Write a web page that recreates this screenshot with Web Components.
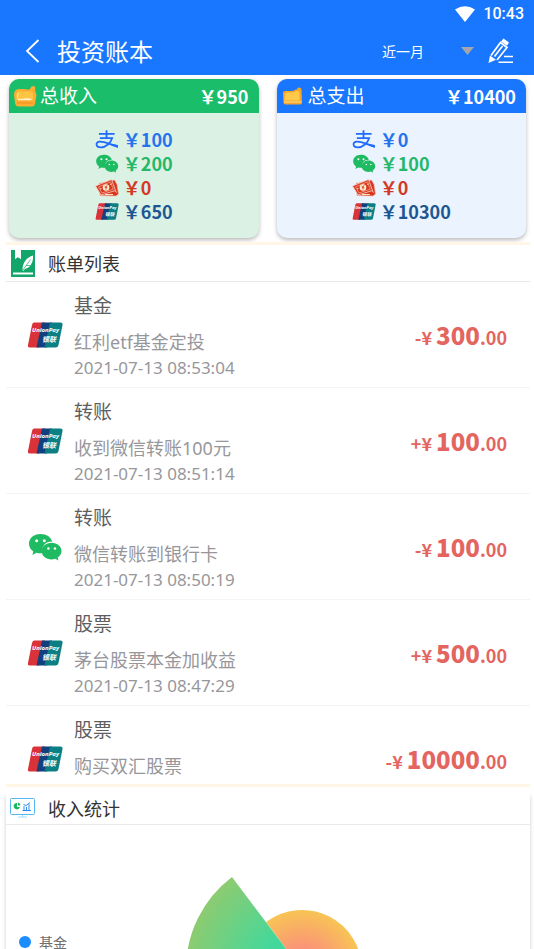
<!DOCTYPE html>
<html lang="zh-CN">
<head>
<meta charset="utf-8">
<meta name="viewport" content="width=device-width, initial-scale=1">
<title>投资账本</title>
<style>
  html, body { height: 100%; margin: 0; }
  body { background: #fff; font-family: "Noto Sans", "Noto Sans CJK SC", sans-serif; overflow: hidden; }
</style>
</head>
<body>
<ledger-page>
  <status-bar slot="top">10:43</status-bar>
  <app-bar slot="top">投资账本</app-bar>
  <summary-card slot="summary" kind="income" total="￥950" alipay="￥100" wechat="￥200" cash="￥0" union="￥650">总收入</summary-card>
  <summary-card slot="summary" kind="expense" total="￥10400" alipay="￥0" wechat="￥100" cash="￥0" union="￥10300">总支出</summary-card>
  <bill-list>
    <bill-row icon="union" sign="-" amount="300">基金<span slot="note">红利etf基金定投</span><time slot="time">2021-07-13 08:53:04</time></bill-row>
    <bill-row icon="union" sign="+" amount="100">转账<span slot="note">收到微信转账100元</span><time slot="time">2021-07-13 08:51:14</time></bill-row>
    <bill-row icon="wechat" sign="-" amount="100">转账<span slot="note">微信转账到银行卡</span><time slot="time">2021-07-13 08:50:19</time></bill-row>
    <bill-row icon="union" sign="+" amount="500">股票<span slot="note">茅台股票本金加收益</span><time slot="time">2021-07-13 08:47:29</time></bill-row>
    <bill-row icon="union" sign="-" amount="10000">股票<span slot="note">购买双汇股票</span></bill-row>
  </bill-list>
  <income-stats></income-stats>
</ledger-page>
<script>
const ICONS = {
  alipay: `<svg viewBox="0 0 24 20" fill="none" stroke="#1f6bff"><path d="M3.500 4H20M11.500 .3V8.500" stroke-width="1.900"/><path d="M4.500 8.500H17.500C16 13.500 11 18.300 5.500 18.300C0 18.300 -.5 13.200 4 12.300C9 11.500 15 15.500 23 17.500" stroke-width="1.800"/><path d="M12.500 13.500L23.500 15.800V19Z" fill="#1f6bff" stroke="none"/></svg>`,
  wechat: `<svg viewBox="0 0 34 28"><path d="M12.500 1C5.500 1 1 5.300 1 10.700c0 3.300 1.700 6 4.400 7.700L4.300 22l4.300-2.200c2 .6 4.200.6 6.300.3C12.500 13 18 8.300 24.200 8.500 23 4 18.500 1 12.500 1Z" fill="#1fbb62"/><path d="M23.600 9.700c-5.700 0-10 3.700-10 8.300s4.300 8.400 10 8.400c1.300 0 2.500-.2 3.600-.6L30.500 27.500l-.8-3c2.300-1.500 3.800-3.800 3.800-6.500 0-4.600-4.200-8.300-9.900-8.300Z" fill="#1fbb62"/><g fill="#fff"><circle cx="8.700" cy="7.800" r="1.500"/><circle cx="16.300" cy="7.800" r="1.500"/><circle cx="20.400" cy="15.500" r="1.200"/><circle cx="27" cy="15.500" r="1.200"/></g></svg>`,
  cash: `<svg viewBox="0 0 24 18"><path d="M4 5L19.500 1.500 22 6 23.500 15.500 21 17.500 5 17Z" fill="#d9361f" stroke="#f6b6a6" stroke-width=".6"/><path d="M.5 7.500L16.500 1 20.500 12 6 16.500Z" fill="#d9361f" stroke="#f8d9cf" stroke-width=".8"/><path d="M3.500 8.500L15.500 3.300 18.300 10.700 7 14.500Z" fill="none" stroke="#f8c9a8" stroke-width=".6"/><circle cx="11" cy="9" r="3.300" fill="#fff0d2"/><path d="M9.500 7.200l1.500 1.700L12 6.700M11 8.900V11.200M9.800 9.200h2.600" stroke="#d9361f" stroke-width=".8" fill="none"/><path d="M5 10.500l1.500-.6M15 6l1.500-.6M20.500 12.500l1 1.500M10 16h8" stroke="#ffe0bd"/></svg>`,
  union: `<svg viewBox="0 0 36 26"><path d="M7 .5H18L12 25.500H2.500Q.5 25.500 1 23L5 3Q5.500 .5 7 .5Z" fill="#d93238"/><path d="M15 .5H25L20 25.500H9.500Z" fill="#123f7d"/><path d="M23 .5H33.500Q36 .5 35.500 3L31.500 23Q31 25.500 28.500 25.500H17.500Z" fill="#0b7f83"/><g fill="#fff" font-family="Noto Sans, sans-serif" font-weight="700" font-style="italic"><text x="5" y="10" font-size="6">UnionPay</text><text x="15" y="20" font-size="7" font-family="Noto Sans CJK SC, sans-serif">银联</text></g></svg>`,
  income: `<svg viewBox="0 0 24 22"><path d="M1 10Q1 4 6 4H12Q15 5 17 4Q18 1 20.500 1Q23 1.500 22 5L23.500 10 22 19Q21.500 21.500 19 21.500H6Q2.500 21.500 2 18Z" fill="#faad32"/><path d="M5 6.500H18Q20 6.500 20 9V15H3.500V9Q3.500 6.500 5 6.500Z" fill="#ffc542"/><path d="M5 14.500H18.500M12 13l2 1.500 2-1.500" stroke="#fff0c7" fill="none" stroke-width="1.300"/><path d="M5.500 8Q4 10 4.500 13" stroke="#ffe69b" fill="none"/><path d="M4 18H20" stroke="#f18b21"/></svg>`,
  expense: `<svg viewBox="0 0 24 22"><path d="M2 8Q2 6 4 6H10Q13 6 14.500 4.500H16Q16 2.500 18 2.500Q20.500 2.500 20.500 5L21 17.500Q21 19.500 19 19.500H4.500Q2.500 19.500 2.500 17.500Z" fill="#f6a526"/><path d="M4 9Q4 7.500 6 7.500H11Q14 7.500 15 6H17Q18.500 6 18.500 8V15.500H3.500Z" fill="#ffc94c"/><path d="M3 17H20.500" stroke="#ffe09a" stroke-width="1.200"/></svg>`,
  book: `<svg viewBox="0 0 24 27"><path d="M0 0H4V9L7 7 10 9V0H24V27H0Z" fill="#12a66a"/><path d="M4 0V9L7 7 10 9V0Z" fill="#fff"/><path d="M2 22.500H22V24.500H2Z" fill="#fff"/><path d="M11.500 20C11.500 12 16 7.500 22 5.500C22.500 10 21 14 18.500 16.500C16.500 18.500 14 18 12.500 21Z" fill="#fff"/><path d="M12 20L19.500 9.500M15 15.500h4" stroke="#12a66a" stroke-width=".7"/></svg>`,
  board: `<svg viewBox="0 0 25 20" fill="none"><rect x=".5" y=".5" width="24" height="16" rx="1" stroke="#58b7f2"/><path d="M8 19H17M12.500 17V19" stroke="#a5d9f8"/><path d="M7 5A3.200 3.200 0 1 0 10 9H7Z" fill="#19b85d"/><path d="M8 4.500A3.200 3.200 0 0 1 10.500 7.500H8Z" fill="#19b85d"/><path d="M12.500 12.500H21M14 12V8M16.500 12V9M19 12V6M13.500 6.500L16 7.500L20 4.500" stroke="#2e8df0"/></svg>`
};

function define(name, template) {
  customElements.define(name, class extends HTMLElement {
    constructor() {
      super();
      this.attachShadow({ mode: 'open' }).innerHTML =
        typeof template === 'function' ? template(this) : template;
    }
  });
}

define('ui-icon', el => `<style>
  :host { display: block; flex: none; }
  svg { display: block; width: 100%; height: 100%; }
</style>${ICONS[el.getAttribute('name')]}`);

define('ledger-page', `<style>
  :host { display: flex; flex-direction: column; height: 100vh; overflow: hidden; }
  .cards { display: grid; grid-template-columns: 1fr 1fr; gap: 18px; padding: 4px 8px 4px 9px; }
</style>
<header><slot name="top"></slot></header>
<section class="cards"><slot name="summary"></slot></section>
<slot></slot>`);

define('status-bar', `<style>
  :host { display: flex; height: 28px; align-items: center; justify-content: flex-end; gap: 8px; padding-right: 10px;
    background: #1976ff; color: #fff; font: 500 16px/28px Roboto, sans-serif; }
  svg { width: 20px; height: 16px; }
</style>
<svg viewBox="0 0 20 16"><path d="M0 3.500Q10 -3 20 3.500L10 16Z" fill="#fff"/></svg>
<slot></slot>`);

define('app-bar', `<style>
  :host { display: flex; height: 45px; align-items: center; background: #1976ff; color: #fff; padding: 0 18px 2px 20px; }
  button { border: 0; background: none; padding: 0; color: inherit; display: block; }
  svg { display: block; }
  .back { padding: 0 12px 0 5px; }
  h1 { flex: 1; margin: 0; padding-left: 5px; font: 400 24px/44px "Noto Sans CJK SC", sans-serif; }
  .pick { display: flex; align-items: center; position: relative; margin-right: 12px; }
  select { appearance: none; border: 0; background: none; color: inherit; width: 92px; padding: 0;
    font: 400 14px/24px "Noto Sans CJK SC", sans-serif; }
  .pick svg { position: absolute; right: 0; pointer-events: none; }
  option { color: #333; }
</style>
<button class="back" aria-label="返回"><svg width="15" height="26" viewBox="0 0 15 26"><path d="M13.500 2L2 13L13.500 24" fill="none" stroke="#fff" stroke-width="1.800"/></svg></button>
<h1><slot></slot></h1>
<div class="pick"><select aria-label="时间范围"><option>近一月</option></select>
<svg width="13" height="8" viewBox="0 0 13 8"><path d="M0 0H13L6.500 8Z" fill="#a5a5ae"/></svg></div>
<button aria-label="编辑"><svg width="30" height="26" viewBox="0 0 30 26"><g fill="none" stroke="#fff" stroke-width="1.700"><path d="M5 17.500L14.500 4.500L21 9.500L11 22"/><path d="M8.500 18.500L16.500 8"/></g><path d="M15 3.500L17.500 .5L23 4.500L21 7.800Z" fill="#fff"/><path d="M4 17.500L10 21.800L2.500 25Z" fill="#fff"/><path d="M18 18.500H27M12.500 24.200H27" stroke="#fff" stroke-width="1.600"/></svg></button>`);

define('summary-card', el => `<style>
  :host { --tone: #1abd69; --fill: #dbf1e3; display: block; border-radius: 10px; overflow: hidden;
    background: var(--fill); box-shadow: 0 2px 4px rgba(0,0,0,.28); font-family: "Noto Sans CJK SC", sans-serif; }
  :host([kind="expense"]) { --tone: #1976ff; --fill: #ebf3ff; }
  header { display: flex; align-items: center; height: 34px; background: var(--tone); color: #fff; padding: 0 10px 0 4px; }
  header ui-icon { width: 24px; height: 22px; margin-right: 3px; }
  h2 { margin: 0; flex: 1; font: inherit; font-size: 19px; line-height: 32px; padding-bottom: 2px; }
  b { font-size: 18px; line-height: 32px; }
  ul { list-style: none; margin: 0 auto; padding: 14px 0 15px; width: max-content; }
  li { display: flex; align-items: center; height: 24px; font-size: 18px; line-height: 24px; font-weight: 700; }
  li ui-icon { width: 24px; height: 19px; margin-right: 4px; }
</style>
<header><ui-icon name="${el.getAttribute('kind')}"></ui-icon><h2><slot></slot></h2><b>${el.getAttribute('total')}</b></header>
<ul>${[['alipay', '#2474ee'], ['wechat', '#25b86a'], ['cash', '#d33a25'], ['union', '#1c5794']].map(([k, c]) =>
  `<li style="color:${c}"><ui-icon name="${k}"></ui-icon>${el.getAttribute(k)}</li>`).join('')}</ul>`);

define('bill-list', `<style>
  :host { display: block; flex: none; margin: 0 4px 0 6px; border: solid #fff6e6; border-width: 3px 0; color: #333; }
  header { display: flex; align-items: center; gap: 13px; height: 36px; padding-left: 5px; border-bottom: 1px solid #e6e9e8; }
  header ui-icon { width: 24px; height: 27px; }
  h2 { margin: 0; font: 400 18px/36px "Noto Sans CJK SC", sans-serif; }
  .rows { max-height: 502px; overflow-y: auto; scrollbar-width: none; }
</style>
<header><ui-icon name="book"></ui-icon><h2>账单列表</h2></header>
<div class="rows"><slot></slot></div>`);

define('bill-row', el => `<style>
  :host { display: flex; align-items: center; box-sizing: border-box; min-height: 106px; padding: 0 23px 0 21px;
    border-bottom: 1px solid #f4f4f4; }
  ui-icon { width: 36px; height: 28px; margin-right: 11px; }
  .text { flex: 1; align-self: flex-start; padding-top: 12px; }
  h3 { margin: 0 0 10px; font-size: 19px; line-height: 25px; font-weight: 400; color: #5e5e5e; }
  .line { font-size: 18px; line-height: 26px; color: #97979b; }
  .time { font-size: 17px; }
  .money { padding-top: 2px; font: 700 18px/32px "Noto Sans CJK SC", sans-serif; color: #e4655f; white-space: nowrap; }
  .money b { font-size: 24px; margin-left: 4px; }
</style>
<ui-icon name="${el.getAttribute('icon')}"></ui-icon>
<div class="text"><h3><slot></slot></h3><div class="line"><slot name="note"></slot></div><div class="line time"><slot name="time"></slot></div></div>
<div class="money">${el.getAttribute('sign')}¥<b>${el.getAttribute('amount')}</b>.00</div>`);

define('income-stats', `<style>
  :host { display: flex; flex-direction: column; flex: 1; min-height: 0; margin: 5px 4px 0 6px;
    background: #fff; box-shadow: 0 4px 4px rgba(0,0,0,.2); font-family: "Noto Sans CJK SC", sans-serif; }
  header { display: flex; flex: none; align-items: center; gap: 13px; height: 32px; padding-left: 4px; border-bottom: 1px solid #e8eaec; }
  header ui-icon { width: 25px; height: 20px; }
  h2 { margin: 0; font-size: 18px; line-height: 30px; font-weight: 400; color: #333; }
  .chart { display: grid; grid-template-columns: 68px 1fr; flex: 1; min-height: 0; overflow: hidden; }
  .legend { display: flex; align-items: center; gap: 8px; height: 18px; margin-top: 108px; padding-left: 13px; font-size: 14px; line-height: 18px; color: #6e6e6e; }
  .legend i { width: 12px; height: 12px; border-radius: 50%; background: #1b8dff; }
  svg { display: block; width: 240px; height: 290px; justify-self: center; }
</style>
<header><ui-icon name="board"></ui-icon><h2>收入统计</h2></header>
<div class="chart">
  <div class="legend"><i></i>基金</div>
  <svg viewBox="-120 -145 240 290" role="img" aria-label="收入统计图">
    <defs>
      <radialGradient id="g" gradientUnits="userSpaceOnUse" cx="0" cy="0" r="130"><stop offset=".3" stop-color="#43d89b"/><stop offset="1" stop-color="#9ac969"/></radialGradient>
      <radialGradient id="o" gradientUnits="userSpaceOnUse" cx="0" cy="0" r="60"><stop offset=".2" stop-color="#fb8780"/><stop offset="1" stop-color="#f8c455"/></radialGradient>
    </defs>
    <path d="M0 0L-36 -48A60 60 0 0 1 60 0Z" fill="url(#o)"/>
    <path d="M0 0L-70 -93A116 116 0 0 0 -116 0Z" fill="url(#g)"/>
  </svg>
</div>`);
</script>
</body>
</html>
